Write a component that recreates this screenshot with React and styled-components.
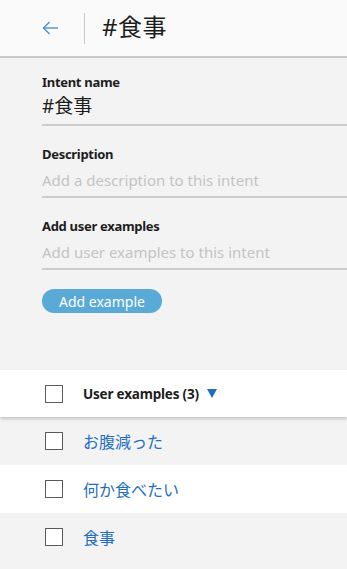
import styled, { createGlobalStyle } from "styled-components";

const GlobalStyle = createGlobalStyle`
  html, body {
    margin: 0;
    padding: 0;
    background: #f3f3f3;
    font-family: "Noto Sans", "Noto Sans CJK JP", sans-serif;
    color: #152935;
  }
`;

const Page = styled.div`
  width: 347px;
  height: 569px;
  overflow: hidden;
  background: #f3f3f3;
`;

const Header = styled.header`
  height: 56px;
  background: #fafafa;
  border-bottom: 2px solid #c8c8c8;
  display: flex;
  align-items: center;
  padding-left: 42px;
`;

const BackButton = styled.button`
  border: none;
  background: none;
  padding: 0;
  width: 18px;
  height: 18px;
  display: flex;
  align-items: center;
  color: #3d8fd1;
`;

const Divider = styled.div`
  width: 1px;
  height: 31px;
  background: #c8c8c8;
  margin: 0 17px 0 24px;
`;

const Title = styled.h1`
  margin: 0 0 5px;
  font-size: 24px;
  font-weight: 400;
  color: #1d1d1d;
  letter-spacing: 0.5px;
`;

const Form = styled.div`
  padding: 15px 0 0 42px;
  height: 297px;
`;

const Field = styled.div`
  margin-bottom: 19px;
`;

const Label = styled.div`
  font-size: 13px;
  font-weight: 700;
  color: #1d1d1d;
  line-height: 18px;
  letter-spacing: -0.3px;
`;

const Input = styled.div`
  font-size: ${(p) => (p.$value ? "19px" : "15px")};
  color: ${(p) => (p.$value ? "#1d1d1d" : "#c4c4c4")};
  line-height: 26px;
  margin-top: ${(p) => (p.$value ? "2px" : "4px")};
  padding-bottom: ${(p) => (p.$value ? "5px" : "3px")};
  border-bottom: 2px solid #cdcdcd;
`;

const AddButton = styled.button`
  display: block;
  margin-top: 2px;
  height: 24px;
  width: 120px;
  border: none;
  border-radius: 12px;
  background: #5aaad7;
  color: #fff;
  font-family: inherit;
  font-size: 14px;
  padding: 0;
`;

const Table = styled.div``;

const HeadRow = styled.div`
  height: 47px;
  background: #fff;
  display: flex;
  align-items: center;
  padding-left: 45px;
  box-shadow: 0 2px 3px rgba(0, 0, 0, 0.2);
  position: relative;
`;

const Row = styled.div`
  height: 48px;
  background: ${(p) => (p.$alt ? "#fff" : "#f3f3f3")};
  display: flex;
  align-items: center;
  padding-left: 45px;
`;

const Checkbox = styled.span`
  width: 16px;
  height: 16px;
  border: 1px solid #5a5a5a;
  background: #fff;
  flex: none;
  margin-right: 20px;
`;

const HeadText = styled.span`
  font-size: 13.5px;
  font-weight: 700;
  color: #1d1d1d;
  display: flex;
  align-items: center;
  letter-spacing: -0.2px;
`;

const Caret = styled.span`
  width: 0;
  height: 0;
  border-left: 5.5px solid transparent;
  border-right: 5.5px solid transparent;
  border-top: 9px solid #1f6fc1;
  margin-left: 8px;
`;

const Example = styled.span`
  font-size: 16px;
  color: #1f6fc1;
`;

const examples = ["お腹減った", "何か食べたい", "食事"];

export default function App() {
  return (
    <Page>
      <GlobalStyle />
      <Header>
        <BackButton aria-label="back">
          <svg width="17" height="14" viewBox="0 0 17 14" fill="none" stroke="currentColor" strokeWidth="1.3">
            <path d="M16 7H1.5" />
            <path d="M7.5 1L1.5 7l6 6" />
          </svg>
        </BackButton>
        <Divider />
        <Title>#食事</Title>
      </Header>
      <Form>
        <Field>
          <Label>Intent name</Label>
          <Input $value>#食事</Input>
        </Field>
        <Field>
          <Label>Description</Label>
          <Input>Add a description to this intent</Input>
        </Field>
        <Field>
          <Label>Add user examples</Label>
          <Input>Add user examples to this intent</Input>
        </Field>
        <AddButton>Add example</AddButton>
      </Form>
      <Table>
        <HeadRow>
          <Checkbox />
          <HeadText>
            User examples (3)
            <Caret />
          </HeadText>
        </HeadRow>
        {examples.map((text, i) => (
          <Row key={text} $alt={i % 2 === 1}>
            <Checkbox />
            <Example>{text}</Example>
          </Row>
        ))}
      </Table>
    </Page>
  );
}
